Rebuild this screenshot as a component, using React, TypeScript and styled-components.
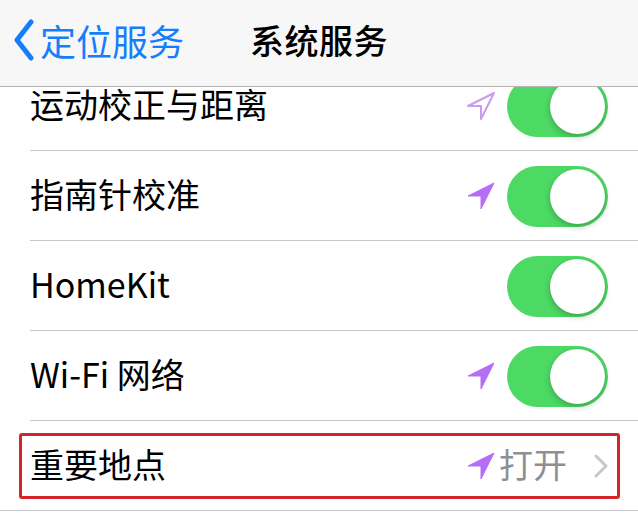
import React from 'react';
import styled, { createGlobalStyle } from 'styled-components';

const GlobalStyle = createGlobalStyle`
  html, body {
    margin: 0;
    padding: 0;
    background: #ffffff;
  }
  body {
    font-family: 'Noto Sans CJK SC', 'Noto Sans', sans-serif;
  }
`;

const Page = styled.div`
  width: 638px;
  height: 513px;
  overflow: hidden;
  display: flex;
  flex-direction: column;
  background: #ffffff;
`;

const NavBar = styled.div`
  height: 87px;
  flex-shrink: 0;
  display: flex;
  align-items: center;
  padding-bottom: 6px;
  box-sizing: border-box;
  background: #f7f7f7;
  border-bottom: 1px solid #b4b4b4;
  position: relative;
  z-index: 2;
`;

const BackButton = styled.div`
  display: flex;
  align-items: center;
  gap: 5px;
  padding-left: 13px;
  color: #157efb;
  font-size: 36px;
  line-height: 1;
`;

const NavTitle = styled.div`
  margin-left: 66px;
  font-size: 34px;
  font-weight: 500;
  letter-spacing: 0.5px;
  color: #000000;
  line-height: 1;
`;

const ListViewport = styled.div`
  flex: 1;
  overflow: hidden;
`;

const List = styled.div`
  margin-top: -26px;
  display: flex;
  flex-direction: column;
`;

const Row = styled.div<{ $last?: boolean }>`
  height: 90px;
  display: flex;
  align-items: center;
  padding-left: 30px;
  padding-right: 30px;
  position: relative;
  &::after {
    content: '';
    position: absolute;
    bottom: 0;
    right: 0;
    left: ${(p) => (p.$last ? '0' : '30px')};
    height: 1px;
    background: #c8c7cc;
  }
`;

const Label = styled.div`
  flex: 1;
  font-size: 34px;
  color: #000000;
  line-height: 1;
  white-space: nowrap;
  padding-bottom: 4px;
`;

const Accessory = styled.div`
  display: flex;
  align-items: center;
`;

const ArrowSlot = styled.div`
  width: 28px;
  height: 28px;
  display: flex;
  align-items: center;
  justify-content: center;
  margin-right: 12px;
`;

const Switch = styled.div`
  width: 101px;
  height: 61px;
  border-radius: 31px;
  background: #4cd964;
  position: relative;
  flex-shrink: 0;
`;

const Knob = styled.div`
  position: absolute;
  top: 3px;
  right: 3px;
  width: 55px;
  height: 55px;
  border-radius: 50%;
  background: #ffffff;
  box-shadow: 0 3px 6px rgba(0, 0, 0, 0.22), 0 0 1px rgba(0, 0, 0, 0.2);
`;

const Value = styled.div`
  font-size: 34px;
  color: #8e8e93;
  line-height: 1;
  padding-bottom: 4px;
  margin-left: -8px;
  margin-right: 27px;
`;

const Highlight = styled.div`
  position: absolute;
  left: 19px;
  right: 18px;
  top: 12px;
  bottom: 12px;
  border: 3px solid #d3262b;
  border-radius: 3px;
  pointer-events: none;
`;

function LocationArrow({ outline }: { outline?: boolean }) {
  return (
    <svg width="28" height="28" viewBox="0 0 28 28">
      <polygon
        points="27,1 1,14 14,14 14,27"
        fill={outline ? 'none' : '#b46ef5'}
        stroke={outline ? '#c79cf2' : '#b46ef5'}
        strokeWidth={outline ? 2 : 1}
        strokeLinejoin="round"
      />
    </svg>
  );
}

function Toggle() {
  return (
    <Switch>
      <Knob />
    </Switch>
  );
}

const rows = [
  { label: '运动校正与距离', arrow: 'outline' },
  { label: '指南针校准', arrow: 'fill' },
  { label: 'HomeKit', arrow: 'none' },
  { label: 'Wi-Fi 网络', arrow: 'fill' },
];

export default function App() {
  return (
    <Page>
      <GlobalStyle />
      <NavBar>
        <BackButton>
          <svg width="22" height="42" viewBox="0 0 22 42">
            <polyline
              points="18,3 4,21 18,39"
              fill="none"
              stroke="#157efb"
              strokeWidth="5"
              strokeLinecap="round"
              strokeLinejoin="round"
            />
          </svg>
          <span>定位服务</span>
        </BackButton>
        <NavTitle>系统服务</NavTitle>
      </NavBar>
      <ListViewport>
        <List>
          {rows.map((r) => (
            <Row key={r.label}>
              <Label>{r.label}</Label>
              <Accessory>
                <ArrowSlot>
                  {r.arrow !== 'none' && <LocationArrow outline={r.arrow === 'outline'} />}
                </ArrowSlot>
                <Toggle />
              </Accessory>
            </Row>
          ))}
          <Row $last>
            <Label>重要地点</Label>
            <Accessory>
              <ArrowSlot>
                <LocationArrow />
              </ArrowSlot>
              <Value>打开</Value>
              <svg width="14" height="24" viewBox="0 0 14 24">
                <polyline
                  points="2,2 12,12 2,22"
                  fill="none"
                  stroke="#c7c7cc"
                  strokeWidth="3"
                  strokeLinecap="round"
                  strokeLinejoin="round"
                />
              </svg>
            </Accessory>
            <Highlight />
          </Row>
        </List>
      </ListViewport>
    </Page>
  );
}
